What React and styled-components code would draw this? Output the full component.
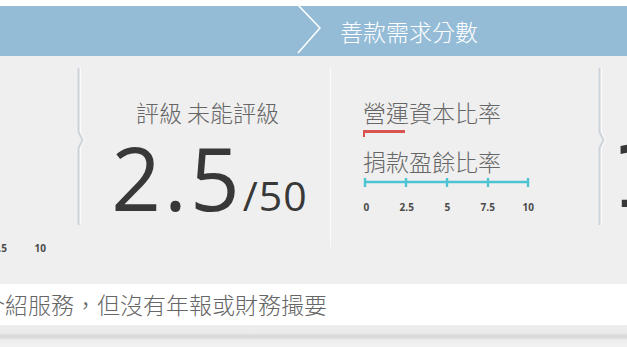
import React from 'react';
import styled, { createGlobalStyle } from 'styled-components';

const GlobalStyle = createGlobalStyle`
  html, body {
    margin: 0;
    padding: 0;
    background: #ffffff;
    overflow: hidden;
  }
`;

const cjk = `"Noto Sans CJK TC", "Noto Sans", sans-serif`;

const Page = styled.div`
  width: 627px;
  height: 347px;
  overflow: hidden;
  background: #ffffff;
  padding-top: 6px;
  box-sizing: border-box;
  font-family: ${cjk};
`;

const TitleBar = styled.div`
  height: 50px;
  background: #94bcd7;
  display: flex;
  align-items: center;
  padding-left: 297px;
`;

const Title = styled.span`
  margin-left: 19px;
  color: #ffffff;
  font-size: 23px;
  font-weight: 300;
  line-height: 1;
`;

const Strip = styled.div`
  height: 228px;
  background: #efefef;
  display: flex;
  overflow: hidden;
`;

const Stub = styled.div`
  width: ${p => p.$width || 'auto'};
  flex: ${p => (p.$grow ? 1 : 'none')};
  overflow: hidden;
  display: flex;
  flex-direction: column;
  justify-content: ${p => p.$justify || 'flex-start'};
  padding-bottom: ${p => p.$padBottom || 0}px;
  box-sizing: border-box;
`;

const RatingHalf = styled.div`
  width: 245px;
  display: flex;
  flex-direction: column;
  align-items: center;
  padding-top: 45px;
`;

const Separator = styled.div`
  width: 1px;
  height: 180px;
  margin-top: 11px;
  background: #fbfbfb;
`;

const RatiosHalf = styled.div`
  width: 267px;
  display: flex;
  flex-direction: column;
  align-items: flex-start;
  padding-top: 45px;
  padding-left: 32px;
  box-sizing: border-box;
`;

const Label = styled.div`
  font-size: 23px;
  line-height: 23px;
  font-weight: 300;
  color: #666666;
  white-space: nowrap;
  margin-top: ${p => p.$top || 0}px;
`;

const Score = styled.div`
  margin-top: 10px;
  margin-left: 4px;
  font-family: "Open Sans", "DejaVu Sans", sans-serif;
  font-size: 87px;
  line-height: 87px;
  letter-spacing: 3px;
  color: #383838;
  white-space: nowrap;
`;

const OutOf = styled.span`
  font-size: 41px;
  line-height: 1;
  letter-spacing: 1px;
`;

const RatioBar = styled.div`
  margin-top: 6px;
  width: 40px;
  height: 4px;
  border-top: 3px solid #d9534f;
  border-left: 2px solid #d9534f;
`;

const Ruler = styled.svg`
  display: block;
  margin-top: 5px;
`;

const TickLabels = styled.div`
  display: grid;
  grid-template-columns: repeat(5, 40.5px);
  margin-top: ${p => p.$top || 0}px;
  margin-left: ${p => p.$left}px;
  flex: none;
  font-family: "Open Sans", "DejaVu Sans", sans-serif;
  font-size: 10px;
  font-weight: 700;
  line-height: 12px;
  color: #4a4a4a;
  text-align: center;
`;

const NextNumber = styled.div`
  font-family: "DejaVu Sans", sans-serif;
  font-size: 87px;
  line-height: 87px;
  color: #383838;
  margin-top: 78px;
  margin-left: 5px;
`;

const Note = styled.div`
  height: 41px;
  background: #ffffff;
  overflow: hidden;
  white-space: nowrap;
`;

const NoteText = styled.span`
  display: inline-block;
  margin-left: -18px;
  font-size: 23px;
  line-height: 41px;
  font-weight: 300;
  color: #666666;
`;

const Shelf = styled.div`
  height: 22px;
  background: linear-gradient(
    #ededed 0px,
    #ebebeb 8px,
    #dcdcdc 10px,
    #d8d8d8 12px,
    #ececec 15px,
    #f3f3f3 22px
  );
`;

function Chevron() {
  return (
    <svg width="24" height="50" viewBox="0 0 24 50">
      <polyline points="1,-1 23,22 1,47" fill="none" stroke="#ffffff" strokeWidth="1.6" />
    </svg>
  );
}

function Divider() {
  return (
    <svg width="8" height="157" viewBox="0 0 8 157" style={{ marginTop: 12, flex: 'none' }}>
      <path
        d="M2.5 0 V64 L6.5 72 L2.5 80 V157"
        fill="none"
        stroke="#fbfbfb"
        strokeWidth="1"
        transform="translate(1 0)"
      />
      <path d="M1.5 0 V64 L5.5 72 L1.5 80 V157" fill="none" stroke="#ccd3da" strokeWidth="1.8" />
    </svg>
  );
}

const ticks = [2, 43, 84, 125, 165];
const tickText = ['0', '2.5', '5', '7.5', '10'];

function Scale() {
  return (
    <Ruler width="167" height="9" viewBox="0 0 167 9">
      <line x1="2" y1="4" x2="165" y2="4" stroke="#4ec3d3" strokeWidth="2.4" />
      {ticks.map(x => (
        <line key={x} x1={x} y1="0" x2={x} y2="9" stroke="#4ec3d3" strokeWidth="2.4" />
      ))}
    </Ruler>
  );
}

function Labels({ left, top }) {
  return (
    <TickLabels $left={left} $top={top}>
      {tickText.map(t => (
        <span key={t}>{t}</span>
      ))}
    </TickLabels>
  );
}

export default function App() {
  return (
    <>
      <GlobalStyle />
      <Page>
        <TitleBar>
          <Chevron />
          <Title>善款需求分數</Title>
        </TitleBar>
        <Strip>
          <Stub $width="77px" $justify="flex-end" $padBottom={30}>
            <Labels left={-142} />
          </Stub>
          <Divider />
          <RatingHalf>
            <Label>評級 未能評級</Label>
            <Score>
              2.5<OutOf>/50</OutOf>
            </Score>
          </RatingHalf>
          <Separator />
          <RatiosHalf>
            <Label>營運資本比率</Label>
            <RatioBar />
            <Label $top={13}>捐款盈餘比率</Label>
            <Scale />
            <Labels left={-17} top={14} />
          </RatiosHalf>
          <Divider />
          <Stub $grow>
            <NextNumber>1</NextNumber>
          </Stub>
        </Strip>
        <Note>
          <NoteText>介紹服務，但沒有年報或財務撮要</NoteText>
        </Note>
        <Shelf />
      </Page>
    </>
  );
}
